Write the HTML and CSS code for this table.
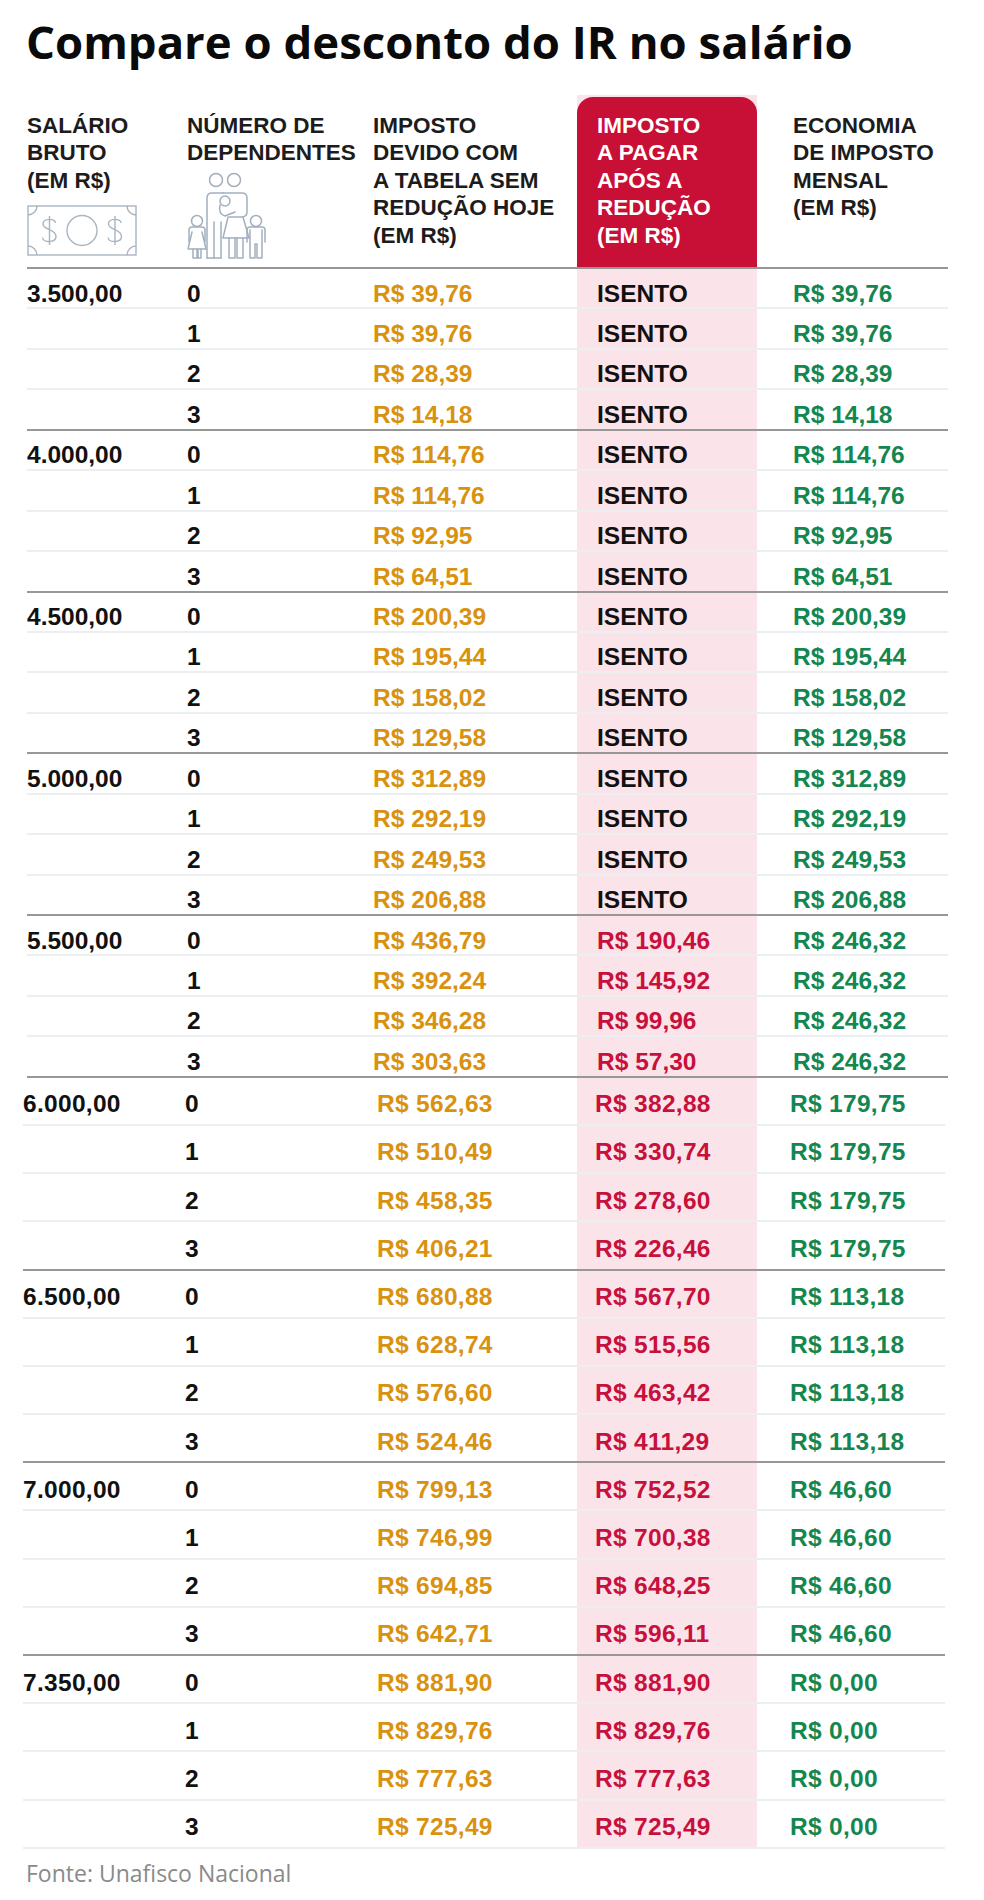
FILE: index.html
```html
<!DOCTYPE html>
<html lang="pt-BR">
<head>
<meta charset="utf-8">
<title>Compare o desconto do IR no salário</title>
<link rel="stylesheet" href="styles.css">
</head>
<body>
<div class="page">
  <h1 class="title">Compare o desconto do IR no salário</h1>

  <div class="head">
    <div class="hcell c1">
      <div class="htext">SALÁRIO<br>BRUTO<br>(EM R$)</div>
      <svg class="bill" width="110" height="51" viewBox="0 0 110 51" fill="none" stroke="#a9b5c2" stroke-width="1.4">
        <rect x="1" y="1" width="108" height="49"/>
        <path d="M1 10 A9 9 0 0 0 10 1"/>
        <path d="M100 1 A9 9 0 0 0 109 10"/>
        <path d="M1 41 A9 9 0 0 1 10 50"/>
        <path d="M100 50 A9 9 0 0 1 109 41"/>
        <circle cx="55" cy="25.5" r="15"/>
        <path d="M28.5 18 C28.5 13 16 13 16 19 C16 25 29 24 29 31.5 C29 38 16 38 15.5 32.5 M22.5 11 V40"/>
        <path d="M94 18 C94 13 81.5 13 81.5 19 C81.5 25 94.5 24 94.5 31.5 C94.5 38 81.5 38 81 32.5 M88 11 V40"/>
      </svg>
    </div>
    <div class="hcell c2">
      <div class="htext">NÚMERO DE<br>DEPENDENTES</div>
      <svg class="family" width="86" height="88" viewBox="0 0 86 88" fill="none" stroke="#a3b0be" stroke-width="1.5" stroke-linejoin="round" stroke-linecap="round">
        <circle cx="31" cy="8" r="6.5"/>
        <circle cx="49" cy="8" r="6.5"/>
        <path d="M22 86 V54 M22 54 V26 Q22 21 27 21 H38"/>
        <path d="M29 86 V50 M36 86 V50"/>
        <path d="M22 86 H36"/>
        <path d="M38 21 H57 Q62 21 62 26 V40 Q62 45 56 45 H44"/>
        <circle cx="40" cy="29" r="5"/>
        <path d="M35 33 Q33 42 40 44 L50 40"/>
        <path d="M43 45 L38 66 H64 L58 45"/>
        <path d="M44 66 V86 H50 V66 M52 66 V86 H58 V66"/>
        <circle cx="12" cy="49" r="5.5"/>
        <path d="M4 58 Q4 55 7 55 H17 Q20 55 20 58 V70 M4 58 V70 M7 60 L3 77 H21 L17 60"/>
        <path d="M8 77 V86 H12 V77 M13 77 V86 H16 V77"/>
        <circle cx="71" cy="49" r="5.5"/>
        <path d="M62 58 Q62 55 65 55 H77 Q80 55 80 58 V70 M62 58 V70 M65 58 V86 H70 V72 H72 V86 H77 V58"/>
      </svg>
    </div>
    <div class="hcell c3">
      <div class="htext">IMPOSTO<br>DEVIDO COM<br>A TABELA SEM<br>REDUÇÃO HOJE<br>(EM R$)</div>
    </div>
    <div class="hcell c4">
      <div class="redbox">
        <div class="htext">IMPOSTO<br>A PAGAR<br>APÓS A<br>REDUÇÃO<br>(EM R$)</div>
      </div>
    </div>
    <div class="hcell c5">
      <div class="htext">ECONOMIA<br>DE IMPOSTO<br>MENSAL<br>(EM R$)</div>
    </div>
  </div>

  <div class="sec s1">
    <div class="block">
      <div class="row"><div class="c1">3.500,00</div><div class="c2">0</div><div class="c3">R$ 39,76</div><div class="c4 blk">ISENTO</div><div class="c5">R$ 39,76</div></div>
      <div class="row"><div class="c1"></div><div class="c2">1</div><div class="c3">R$ 39,76</div><div class="c4 blk">ISENTO</div><div class="c5">R$ 39,76</div></div>
      <div class="row"><div class="c1"></div><div class="c2">2</div><div class="c3">R$ 28,39</div><div class="c4 blk">ISENTO</div><div class="c5">R$ 28,39</div></div>
      <div class="row"><div class="c1"></div><div class="c2">3</div><div class="c3">R$ 14,18</div><div class="c4 blk">ISENTO</div><div class="c5">R$ 14,18</div></div>
    </div>
    <div class="block">
      <div class="row"><div class="c1">4.000,00</div><div class="c2">0</div><div class="c3">R$ 114,76</div><div class="c4 blk">ISENTO</div><div class="c5">R$ 114,76</div></div>
      <div class="row"><div class="c1"></div><div class="c2">1</div><div class="c3">R$ 114,76</div><div class="c4 blk">ISENTO</div><div class="c5">R$ 114,76</div></div>
      <div class="row"><div class="c1"></div><div class="c2">2</div><div class="c3">R$ 92,95</div><div class="c4 blk">ISENTO</div><div class="c5">R$ 92,95</div></div>
      <div class="row"><div class="c1"></div><div class="c2">3</div><div class="c3">R$ 64,51</div><div class="c4 blk">ISENTO</div><div class="c5">R$ 64,51</div></div>
    </div>
    <div class="block">
      <div class="row"><div class="c1">4.500,00</div><div class="c2">0</div><div class="c3">R$ 200,39</div><div class="c4 blk">ISENTO</div><div class="c5">R$ 200,39</div></div>
      <div class="row"><div class="c1"></div><div class="c2">1</div><div class="c3">R$ 195,44</div><div class="c4 blk">ISENTO</div><div class="c5">R$ 195,44</div></div>
      <div class="row"><div class="c1"></div><div class="c2">2</div><div class="c3">R$ 158,02</div><div class="c4 blk">ISENTO</div><div class="c5">R$ 158,02</div></div>
      <div class="row"><div class="c1"></div><div class="c2">3</div><div class="c3">R$ 129,58</div><div class="c4 blk">ISENTO</div><div class="c5">R$ 129,58</div></div>
    </div>
    <div class="block">
      <div class="row"><div class="c1">5.000,00</div><div class="c2">0</div><div class="c3">R$ 312,89</div><div class="c4 blk">ISENTO</div><div class="c5">R$ 312,89</div></div>
      <div class="row"><div class="c1"></div><div class="c2">1</div><div class="c3">R$ 292,19</div><div class="c4 blk">ISENTO</div><div class="c5">R$ 292,19</div></div>
      <div class="row"><div class="c1"></div><div class="c2">2</div><div class="c3">R$ 249,53</div><div class="c4 blk">ISENTO</div><div class="c5">R$ 249,53</div></div>
      <div class="row"><div class="c1"></div><div class="c2">3</div><div class="c3">R$ 206,88</div><div class="c4 blk">ISENTO</div><div class="c5">R$ 206,88</div></div>
    </div>
    <div class="block">
      <div class="row"><div class="c1">5.500,00</div><div class="c2">0</div><div class="c3">R$ 436,79</div><div class="c4">R$ 190,46</div><div class="c5">R$ 246,32</div></div>
      <div class="row"><div class="c1"></div><div class="c2">1</div><div class="c3">R$ 392,24</div><div class="c4">R$ 145,92</div><div class="c5">R$ 246,32</div></div>
      <div class="row"><div class="c1"></div><div class="c2">2</div><div class="c3">R$ 346,28</div><div class="c4">R$ 99,96</div><div class="c5">R$ 246,32</div></div>
      <div class="row"><div class="c1"></div><div class="c2">3</div><div class="c3">R$ 303,63</div><div class="c4">R$ 57,30</div><div class="c5">R$ 246,32</div></div>
    </div>
  </div>

  <div class="sec s2">
    <div class="block">
      <div class="row"><div class="c1">6.000,00</div><div class="c2">0</div><div class="c3">R$ 562,63</div><div class="c4">R$ 382,88</div><div class="c5">R$ 179,75</div></div>
      <div class="row"><div class="c1"></div><div class="c2">1</div><div class="c3">R$ 510,49</div><div class="c4">R$ 330,74</div><div class="c5">R$ 179,75</div></div>
      <div class="row"><div class="c1"></div><div class="c2">2</div><div class="c3">R$ 458,35</div><div class="c4">R$ 278,60</div><div class="c5">R$ 179,75</div></div>
      <div class="row"><div class="c1"></div><div class="c2">3</div><div class="c3">R$ 406,21</div><div class="c4">R$ 226,46</div><div class="c5">R$ 179,75</div></div>
    </div>
    <div class="block">
      <div class="row"><div class="c1">6.500,00</div><div class="c2">0</div><div class="c3">R$ 680,88</div><div class="c4">R$ 567,70</div><div class="c5">R$ 113,18</div></div>
      <div class="row"><div class="c1"></div><div class="c2">1</div><div class="c3">R$ 628,74</div><div class="c4">R$ 515,56</div><div class="c5">R$ 113,18</div></div>
      <div class="row"><div class="c1"></div><div class="c2">2</div><div class="c3">R$ 576,60</div><div class="c4">R$ 463,42</div><div class="c5">R$ 113,18</div></div>
      <div class="row"><div class="c1"></div><div class="c2">3</div><div class="c3">R$ 524,46</div><div class="c4">R$ 411,29</div><div class="c5">R$ 113,18</div></div>
    </div>
    <div class="block">
      <div class="row"><div class="c1">7.000,00</div><div class="c2">0</div><div class="c3">R$ 799,13</div><div class="c4">R$ 752,52</div><div class="c5">R$ 46,60</div></div>
      <div class="row"><div class="c1"></div><div class="c2">1</div><div class="c3">R$ 746,99</div><div class="c4">R$ 700,38</div><div class="c5">R$ 46,60</div></div>
      <div class="row"><div class="c1"></div><div class="c2">2</div><div class="c3">R$ 694,85</div><div class="c4">R$ 648,25</div><div class="c5">R$ 46,60</div></div>
      <div class="row"><div class="c1"></div><div class="c2">3</div><div class="c3">R$ 642,71</div><div class="c4">R$ 596,11</div><div class="c5">R$ 46,60</div></div>
    </div>
    <div class="block last">
      <div class="row"><div class="c1">7.350,00</div><div class="c2">0</div><div class="c3">R$ 881,90</div><div class="c4">R$ 881,90</div><div class="c5">R$ 0,00</div></div>
      <div class="row"><div class="c1"></div><div class="c2">1</div><div class="c3">R$ 829,76</div><div class="c4">R$ 829,76</div><div class="c5">R$ 0,00</div></div>
      <div class="row"><div class="c1"></div><div class="c2">2</div><div class="c3">R$ 777,63</div><div class="c4">R$ 777,63</div><div class="c5">R$ 0,00</div></div>
      <div class="row"><div class="c1"></div><div class="c2">3</div><div class="c3">R$ 725,49</div><div class="c4">R$ 725,49</div><div class="c5">R$ 0,00</div></div>
    </div>
  </div>

  <p class="source">Fonte: Unafisco Nacional</p>
</div>
</body>
</html>
```

FILE: styles.css
```css
* { box-sizing: border-box; }
html, body { margin: 0; padding: 0; background: #fff; }
body { font-family: "Liberation Sans", Arial, sans-serif; color: #111; }

.page { width: 984px; }

.title {
  margin: 0;
  padding: 16px 0 0 26px;
  height: 80px;
  font-family: "Open Sans", "Liberation Sans", sans-serif;
  font-weight: 700;
  font-size: 45.5px;
  line-height: 50px;
  color: #0a0a0a;
}

/* header */
.head {
  margin-left: 27px;
  width: 921px;
  height: 189px;
  display: grid;
  grid-template-columns: 160px 186px 204px 180px 191px;
  border-bottom: 2px solid #979797;
}
.hcell { padding-top: 31.5px; }
.htext {
  font-weight: 700;
  font-size: 22.5px;
  line-height: 27.5px;
  color: #1c1c1c;
}
.head .c4 {
  padding-top: 17px;
  background: linear-gradient(to bottom, transparent 15px, #fbe4e9 15px);
}
.head .c5 { padding-left: 36px; }
.redbox {
  height: 170px;
  background: #c80f36;
  border-radius: 16px 16px 0 0;
  padding: 14.5px 0 0 20px;
}
.redbox .htext { color: #fff; }
.bill { display: block; margin-top: 11px; }
.family { display: block; margin: 5px 0 0 -2px; }

/* body rows */
.sec { display: block; }
.s1 { margin-left: 27px; width: 921px; }
.s2 { margin-left: 23px; width: 922px; }

.row {
  display: grid;
  font-weight: 700;
  font-size: 24.5px;
  line-height: 24px;
  border-bottom: 2px solid #eceff1;
}
.s1 .row {
  grid-template-columns: 160px 186px 204px 180px 191px;
  height: 40.45px;
}
.s2 .row {
  grid-template-columns: 162px 188px 204px 180px 188px;
  height: 48.2px;
  letter-spacing: 0.3px;
}
.block .row:last-child { border-bottom-color: #979797; }
.block.last .row:last-child { border-bottom-color: #eceff1; }

.row > div { height: 100%; }
.s1 .row > div { padding-top: 12.5px; }
.s2 .row > div { padding-top: 14.5px; }

.row .c1, .row .c2 { color: #111; }
.row .c3 { color: #d9920f; }
.row .c4 { color: #c8103c; background: #fbe4e9; }
.row .c4.blk { color: #111; }
.row .c5 { color: #13874f; }

.s1 .row .c4 { padding-left: 20px; }
.s1 .row .c5 { padding-left: 36px; }
.s2 .row .c3 { padding-left: 4px; }
.s2 .row .c4 { padding-left: 18px; }
.s2 .row .c5 { padding-left: 33px; }

.source {
  margin: 10px 0 0 26px;
  font-family: "Open Sans", "Liberation Sans", sans-serif;
  font-size: 23px;
  line-height: 28px;
  color: #8a8a8a;
}
```
